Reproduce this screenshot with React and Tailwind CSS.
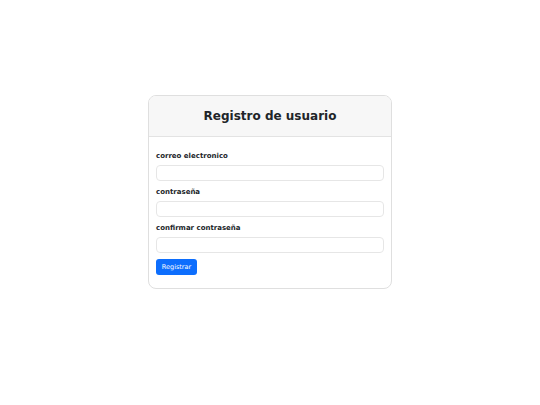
import React from 'react';

// Simple registration card, Bootstrap-like look
const fields = [
  { id: 'email', label: 'correo electronico', type: 'email' },
  { id: 'password', label: 'contraseña', type: 'password' },
  { id: 'confirm', label: 'confirmar contraseña', type: 'password' },
];

function App() {
  return (
    <div className="min-h-screen bg-white pt-[95px] font-['DejaVu_Sans',sans-serif] text-[#212529]">
      <div className="mx-auto w-[244px] rounded-[8px] border border-[#dfdfdf] overflow-hidden">
        {/* Card header */}
        <div className="h-[41px] bg-[#f7f7f7] border-b border-[#e3e3e3] flex items-center justify-center">
          <h1 className="text-[12px] font-bold leading-none">Registro de usuario</h1>
        </div>

        {/* Form body */}
        <form className="px-[7px] pt-[14px] pb-[13px]" onSubmit={(e) => e.preventDefault()}>
          {fields.map((f) => (
            <div key={f.id} className="mb-[6px]">
              <label htmlFor={f.id} className="block text-[7px] font-bold leading-[10px] mb-[4px]">
                {f.label}
              </label>
              <input
                id={f.id}
                type={f.type}
                className="block w-full h-[16px] rounded-[4px] border border-[#e6e6e6] bg-white outline-none"
              />
            </div>
          ))}
          <button
            type="submit"
            className="block mt-[1px] h-[16px] w-[41px] rounded-[3px] bg-[#0d6efd] text-white text-[6.5px] leading-none"
          >
            Registrar
          </button>
        </form>
      </div>
    </div>
  );
}

export default App;
